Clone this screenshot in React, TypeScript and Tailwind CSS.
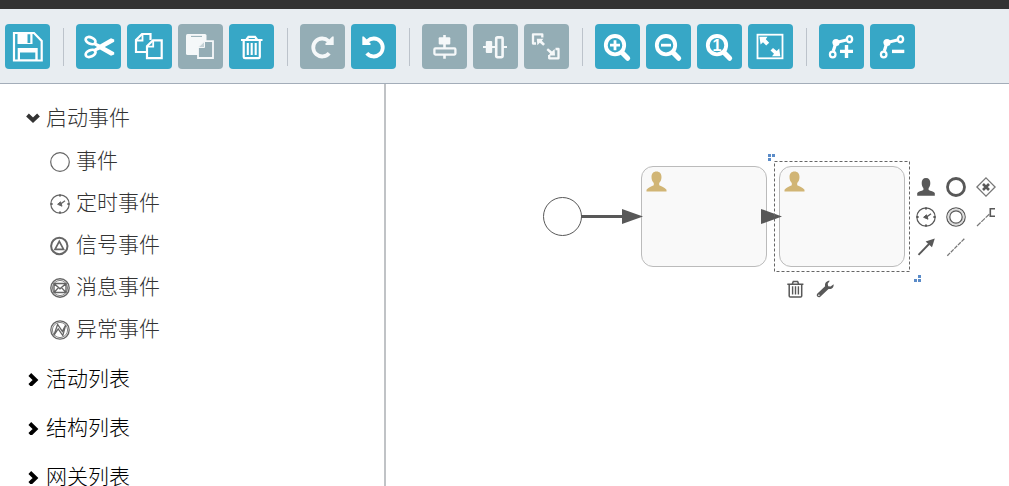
import { useState } from 'react';
import type { ReactNode } from 'react';

type Tool = {
  id: string;
  label: string;
  disabled?: boolean;
  icon: ReactNode;
};

const magnifier = (
  <>
    <circle cx="20" cy="21.2" r="9.2" strokeWidth="3.8" />
    <path d="M27 28.5L32.7 34.3" strokeWidth="5" strokeLinecap="round" />
  </>
);

const polyline = (
  <>
    <path d="M14.3 27L17 18.5L27.5 16" strokeWidth="3.2" />
    <circle cx="17" cy="18.5" r="3.6" fill="currentColor" stroke="none" />
    <circle cx="13.7" cy="30.5" r="2.8" fill="#37a7c6" strokeWidth="2.2" />
    <ellipse cx="30.5" cy="15.2" rx="2.6" ry="3.1" fill="#37a7c6" strokeWidth="2.4" />
  </>
);

const reloadArrow = (
  <>
    <path d="M29.2 29.2A9 9 0 1 1 28.5 17" strokeWidth="3.8" />
    <path d="M33.7 12.5V21H25.5V19.5L32.2 12.5Z" fill="currentColor" stroke="none" />
  </>
);

const toolGroups: Tool[][] = [
  [
    {
      id: 'save',
      label: '保存',
      icon: (
        <>
          <path d="M9 9H29L36.7 17V36.5H9Z" strokeWidth="2.2" />
          <path d="M12.5 8H27.5V20H12.5ZM22.5 10.2V19H25.3V10.2Z" fill="currentColor" stroke="none" fillRule="evenodd" />
          <path d="M12.7 24H32.7V37H12.7ZM15 28.6V35.4H30.3V28.6Z" fill="currentColor" stroke="none" fillRule="evenodd" />
        </>
      ),
    },
  ],
  [
    {
      id: 'cut',
      label: '剪切',
      icon: (
        <>
          <ellipse cx="14.6" cy="16.6" rx="5.2" ry="3.2" transform="rotate(24 14.6 16.6)" strokeWidth="2.8" />
          <ellipse cx="14.6" cy="29.4" rx="5.2" ry="3.2" transform="rotate(-24 14.6 29.4)" strokeWidth="2.8" />
          <path d="M18 18L24 20.6L35 14.2L38.2 15.4V17.8L28.8 23L38.2 28.2V30.6L35 31.8L24 25.4L18 28L17 25.5L21 23L17 20.5Z" fill="currentColor" stroke="none" />
        </>
      ),
    },
    {
      id: 'copy',
      label: '复制',
      icon: (
        <>
          <path d="M19 28H9V16L15 10H23.5V16" strokeWidth="2.2" />
          <path d="M15.5 10V16.5H9" strokeWidth="1.8" />
          <path d="M26 16.3H34.7V34.2H20V22.3Z" strokeWidth="2.2" />
          <path d="M26.2 16.5V22.6H20" strokeWidth="1.8" />
        </>
      ),
    },
    {
      id: 'paste',
      label: '粘贴',
      disabled: true,
      icon: (
        <>
          <rect x="8" y="10" width="20.5" height="21" rx="1.5" fill="currentColor" stroke="none" />
          <path d="M13 12.4H24" stroke="#94adb5" strokeWidth="1" />
          <path d="M26.5 17.2H35V34H20V23.5Z" fill="#94adb5" strokeWidth="1.8" />
          <path d="M26.5 17.2V23.5H20Z" fill="#c6d3d7" strokeWidth="1" />
        </>
      ),
    },
    {
      id: 'delete',
      label: '删除',
      icon: (
        <>
          <path d="M12 16H33.5M17.5 15.5L19.5 12.8H26L28 15.5" strokeWidth="2.2" />
          <path d="M14.7 16V33Q14.7 34.2 16 34.2H29.5Q30.8 34.2 30.8 33V16" strokeWidth="2.2" />
          <path d="M18.8 19V31M22.7 19V31M26.7 19V31" strokeWidth="2.1" />
        </>
      ),
    },
  ],
  [
    { id: 'redo', label: '重做', disabled: true, icon: reloadArrow },
    { id: 'undo', label: '撤销', icon: <g transform="matrix(-1 0 0 1 45 0)">{reloadArrow}</g> },
  ],
  [
    {
      id: 'align-vertical',
      label: '垂直对齐',
      disabled: true,
      icon: (
        <>
          <path d="M22.5 11V24M22.5 31V34.7" strokeWidth="2.6" />
          <rect x="16.7" y="13.2" width="11.6" height="7.2" rx="1" fill="currentColor" stroke="none" />
          <rect x="12.4" y="24.4" width="21" height="6.2" rx="1" strokeWidth="2.3" />
        </>
      ),
    },
    {
      id: 'align-horizontal',
      label: '水平对齐',
      disabled: true,
      icon: (
        <>
          <path d="M10 23H23M30 23H34" strokeWidth="2" />
          <rect x="12.8" y="17" width="6.4" height="12" rx="1" fill="currentColor" stroke="none" />
          <rect x="23.2" y="13.4" width="6.4" height="19.8" rx="1.4" strokeWidth="2.6" />
        </>
      ),
    },
    {
      id: 'same-size',
      label: '相同大小',
      disabled: true,
      icon: (
        <>
          <path d="M12 19.5H9V10.3H18.3V13.5" strokeWidth="2.3" strokeLinejoin="round" />
          <path d="M12.8 14.8H19.4L17.8 16.8L21 20L19.2 21.8L15.8 18.8L13.4 21.2Z" fill="currentColor" stroke="none" />
          <path d="M25.2 31V34.3H34.5V25H31.5" strokeWidth="2.3" strokeLinejoin="round" />
          <path d="M31 31.4H24.4L26.2 29.4L22.5 26L24 24.2L28 27.6L30.6 25Z" fill="currentColor" stroke="none" />
        </>
      ),
    },
  ],
  [
    {
      id: 'zoom-in',
      label: '放大',
      icon: (
        <>
          {magnifier}
          <path d="M15 21.2H25M20 16.2V26.2" strokeWidth="2.8" />
        </>
      ),
    },
    {
      id: 'zoom-out',
      label: '缩小',
      icon: (
        <>
          {magnifier}
          <path d="M15 21.2H25" strokeWidth="2.8" />
        </>
      ),
    },
    {
      id: 'zoom-actual',
      label: '实际大小',
      icon: (
        <>
          {magnifier}
          <text x="20" y="27" textAnchor="middle" fontSize="16" fontWeight="700" fill="currentColor" stroke="none">
            1
          </text>
        </>
      ),
    },
    {
      id: 'zoom-fit',
      label: '适应屏幕',
      icon: (
        <>
          <rect x="9.5" y="10.7" width="25" height="23.6" strokeWidth="1.8" />
          <path d="M11.4 12.8H19.5L17.8 15.3L21.2 18.7L18.2 21.5L15 18.3L12.6 20.6Z" fill="currentColor" stroke="none" />
          <path d="M32.3 32.2H24L26 29.7L22.5 26.5L25 24L28.7 27L31.2 24.5Z" fill="currentColor" stroke="none" />
        </>
      ),
    },
  ],
  [
    {
      id: 'bend-add',
      label: '添加弯曲点',
      icon: (
        <>
          {polyline}
          <path d="M21 27.4H34M27.5 21V34" strokeWidth="3.4" />
        </>
      ),
    },
    {
      id: 'bend-remove',
      label: '删除弯曲点',
      icon: (
        <>
          {polyline}
          <path d="M22 27.4H34.3" strokeWidth="3.4" />
        </>
      ),
    },
  ],
];

const timer = (
  <>
    <circle cx="10" cy="10" r="9.2" strokeWidth="1.2" />
    <path d="M10 0.5V2.6M10 17.4V19.5M0.5 10H2.6M17.4 10H19.5" strokeWidth="2" />
    <path d="M10 10.5L15 6.8" strokeWidth="1.3" />
    <path d="M10.5 7.8L7.6 10.3L12 12.2Z" fill="currentColor" strokeWidth="1" />
  </>
);

const events = [
  { name: '事件', icon: <circle cx="10" cy="10" r="9.3" strokeWidth="1.2" /> },
  { name: '定时事件', icon: timer },
  {
    name: '信号事件',
    icon: (
      <>
        <circle cx="9.3" cy="10" r="8.2" strokeWidth="2" />
        <path d="M9.3 5.3L13.6 13.4H5Z" strokeWidth="1.7" />
      </>
    ),
  },
  {
    name: '消息事件',
    icon: (
      <>
        <circle cx="10" cy="10" r="9.2" strokeWidth="1.4" />
        <circle cx="10" cy="10" r="7.6" strokeWidth="0.8" />
        <path d="M4 5.5H16V14.5H4ZL10 10.8L16 5.5M4 14.5L8.5 9.6M16 14.5L11.5 9.6" strokeWidth="1.4" />
      </>
    ),
  },
  {
    name: '异常事件',
    icon: (
      <>
        <circle cx="10" cy="10" r="9.2" strokeWidth="1.3" />
        <circle cx="10" cy="10" r="7.6" strokeWidth="0.8" />
        <path d="M3.8 15.5L7.6 4.5L12.4 11.4L15.7 5L12.8 15.6L8.2 9Z" strokeWidth="1.3" />
      </>
    ),
  },
];

const personPath =
  'M10 0.5C13.2 0.5 15 2.6 15 6C15 8.6 14.2 10.6 12.7 11.9V14.2C14.5 15.2 18.4 16.5 20 18.8V20.5H0V18.8C1.6 16.5 5.5 15.2 7.3 14.2V11.9C5.8 10.6 5 8.6 5 6C5 2.6 6.8 0.5 10 0.5Z';

const quickActions = [
  {
    label: '用户任务',
    icon: (
      <path
        d="M10 1C13 1 14.3 3 14.3 6C14.3 8.4 13.5 10 12.6 11V13C14.5 14 17.8 14.3 18.8 16V18.7H1.2V16C2.2 14.3 5.5 14 7.4 13V11C6.5 10 5.7 8.4 5.7 6C5.7 3 7 1 10 1Z"
        fill="currentColor"
        stroke="none"
      />
    ),
  },
  { label: '结束事件', icon: <circle cx="10" cy="10" r="8.5" strokeWidth="2.8" /> },
  {
    label: '排他网关',
    icon: (
      <>
        <path d="M10 0.9L19.1 10L10 19.1L0.9 10Z" stroke="#777777" strokeWidth="1.3" />
        <path d="M7 7L13 13M13 7L7 13" strokeWidth="2.6" />
      </>
    ),
  },
  { label: '定时捕获', icon: timer },
  {
    label: '抛出事件',
    icon: (
      <>
        <circle cx="10" cy="10" r="9.2" strokeWidth="1.2" />
        <circle cx="10" cy="10" r="7.4" stroke="#dddddd" strokeWidth="2" />
        <circle cx="10" cy="10" r="6.2" strokeWidth="1.2" />
      </>
    ),
  },
  {
    label: '文本注释',
    icon: (
      <>
        <path d="M1 19L14 6.5" stroke="#777777" strokeWidth="1.2" strokeDasharray="5 1" />
        <path d="M19 1.7H14.3V9.3H19" strokeWidth="1.6" />
      </>
    ),
  },
  {
    label: '顺序流',
    icon: (
      <>
        <path d="M2.5 17.8L13 7" strokeWidth="1.9" />
        <path d="M18.8 1.5L16 10.2L9.6 4.6Z" fill="currentColor" stroke="none" />
      </>
    ),
  },
  { label: '关联', icon: <path d="M1.3 18.7L18.8 1.3" stroke="#777777" strokeWidth="1.3" strokeDasharray="4 1" /> },
];

function SmallIcon({ children }: { children: ReactNode }) {
  return (
    <svg viewBox="0 0 20 20" className="w-5 h-5 shrink-0" fill="none" stroke="currentColor" aria-hidden="true">
      {children}
    </svg>
  );
}

function Toolbar() {
  return (
    <header className="flex items-center border-t-[9px] border-t-[#333333] border-b border-b-[#a3adb9] bg-[#e8edf1] pl-[5px] pt-[15px] pb-3.5">
      {toolGroups.map((group, index) => (
        <div key={group[0].id} className="flex items-center">
          {index > 0 && <span className="ml-[13px] mr-3 h-[38px] w-px bg-[#bcc3cb]" />}
          <div className="flex gap-1.5">
            {group.map((tool) => (
              <button
                key={tool.id}
                type="button"
                aria-label={tool.label}
                disabled={tool.disabled}
                className="w-[45px] h-[45px] rounded bg-[#37a7c6] text-white disabled:bg-[#94adb5] disabled:text-[#f5f8f9]"
              >
                <svg viewBox="0 0 45 45" className="w-full h-full" fill="none" stroke="currentColor" aria-hidden="true">
                  {tool.icon}
                </svg>
              </button>
            ))}
          </div>
        </div>
      ))}
    </header>
  );
}

function Chevron({ open }: { open: boolean }) {
  return (
    <svg viewBox="0 0 14 14" className="w-3.5 h-3.5 shrink-0" fill="none" stroke="currentColor" strokeWidth="4" aria-hidden="true">
      {open ? <path d="M1.5 4L7 9.2L12.5 4" /> : <path d="M3.8 2.5L9.5 8L3.8 13.5" />}
    </svg>
  );
}

function Palette() {
  const [openGroup, setOpenGroup] = useState('启动事件');

  return (
    <aside className="w-[386px] shrink-0 overflow-hidden border-r-2 border-[#c0c3c6] pt-[9px] text-[21px] leading-none font-light">
      {['启动事件', '活动列表', '结构列表', '网关列表'].map((name) => {
        const open = name === openGroup;
        return (
          <section key={name}>
            <button
              type="button"
              aria-expanded={open}
              onClick={() => setOpenGroup(open ? '' : name)}
              className={`flex h-[49px] w-full items-center gap-1.5 pl-[26px] ${open ? 'text-[#333333]' : 'text-black'}`}
            >
              <Chevron open={open} />
              {name}
            </button>
            {open && name === '启动事件' && (
              <ul className="-mt-[3px] pb-[5px] text-[#333333]">
                {events.map((event) => (
                  <li key={event.name}>
                    <button type="button" className="flex h-[42px] w-full cursor-move items-center gap-1.5 pl-[50px]">
                      <span className="pt-1 text-[#666666]">
                        <SmallIcon>{event.icon}</SmallIcon>
                      </span>
                      {event.name}
                    </button>
                  </li>
                ))}
              </ul>
            )}
          </section>
        );
      })}
    </aside>
  );
}

function UserTask({ className }: { className: string }) {
  return (
    <div className={`absolute h-[101px] w-[126px] rounded-xl border border-[#bbbbbb] bg-[#f9f9f9] pl-1 pt-1 ${className}`}>
      <svg viewBox="0 0 20 21" className="h-[21px] w-[21px] text-[#d1b575]" fill="currentColor" aria-hidden="true">
        <path d={personPath} />
      </svg>
    </div>
  );
}

function Canvas() {
  return (
    <main className="relative min-w-0 flex-1 overflow-hidden text-[#585858]">
      <div className="absolute left-[157px] top-[113px] h-[39px] w-[39px] rounded-full border border-[#585858] bg-white" />
      <UserTask className="left-[255px] top-[82px]" />
      <UserTask className="left-[393px] top-[82px]" />

      {/* Sequence flows, selection frame and resize handles */}
      <svg className="pointer-events-none absolute left-0 top-0 h-[230px] w-[620px]" fill="none" aria-hidden="true">
        <path d="M195 132.5H238" stroke="#585858" strokeWidth="3" />
        <path d="M236 125L257 132.5L236 140Z" fill="#585858" />
        <path d="M375 125L396 132.5L375 140Z" fill="#585858" />
        <rect x="388.5" y="77.5" width="135" height="110" stroke="#666666" strokeDasharray="3 2" />
        <path d="M382 70h3v3h-3zM386 70h3v3h-3zM382 74h3v3h-3z" fill="#5a8bc8" />
        <path d="M532 191h3v3h-3zM528 195h3v3h-3zM532 195h3v3h-3z" fill="#5a8bc8" />
      </svg>

      <div className="absolute left-[525px] top-[88px] grid grid-cols-3">
        {quickActions.map((action) => (
          <button key={action.label} type="button" aria-label={action.label} className="flex h-[30px] w-[30px] items-center justify-center">
            <SmallIcon>{action.icon}</SmallIcon>
          </button>
        ))}
      </div>

      <div className="absolute left-[394px] top-[190px] flex">
        <button type="button" aria-label="删除节点" className="flex h-[30px] w-[30px] items-center justify-center">
          <SmallIcon>
            <path d="M2.3 5.3H18.4M7.3 4.8L8.3 2.6H12.6L13.6 4.8" strokeWidth="1.5" />
            <path d="M4.2 5.3V17Q4.2 18 5.4 18H15.6Q16.7 18 16.7 17V5.3" strokeWidth="1.5" />
            <path d="M7.6 7.3V15.5M10.5 7.3V15.5M13.4 7.3V15.5" strokeWidth="1.4" />
          </SmallIcon>
        </button>
        <button type="button" aria-label="更改类型" className="flex h-[30px] w-[30px] items-center justify-center">
          <SmallIcon>
            <path
              d="M14.8 1.8L12.7 4.8L13.2 7.2L15.6 7.6L18.6 5.3C19 8.4 16.8 10.6 13.5 10L5.3 17.7C3.2 19.2 0.7 17 2.2 14.8L10.1 7.2C9.5 4 11.8 1.6 14.8 1.8Z"
              fill="currentColor"
              stroke="none"
            />
            <circle cx="3.9" cy="16.2" r="0.8" fill="white" stroke="none" />
          </SmallIcon>
        </button>
      </div>
    </main>
  );
}

export default function App() {
  return (
    <div className="flex h-screen flex-col overflow-hidden bg-white font-['Liberation_Sans','Noto_Sans_CJK_SC',sans-serif]">
      <Toolbar />
      <div className="flex min-h-0 flex-1">
        <Palette />
        <Canvas />
      </div>
    </div>
  );
}
